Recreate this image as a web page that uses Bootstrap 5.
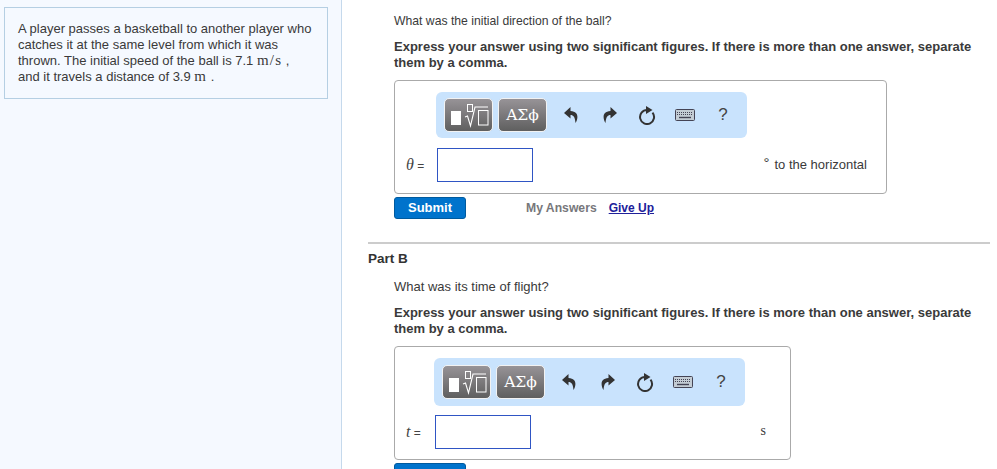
<!DOCTYPE html>
<html lang="en">
<head>
<meta charset="utf-8">
<title>Projectile</title>
<link href="https://cdn.jsdelivr.net/npm/bootstrap@5.3.0/dist/css/bootstrap.min.css" rel="stylesheet">
<style>
html,body{height:469px;overflow:hidden;background:#fff}
body{font-family:"Liberation Sans",Arial,sans-serif;font-size:13px;line-height:16px;color:#3a3a3a}
.shell{height:469px}
.side{width:342px;flex:none;background:#f5f9ff;border-right:1px solid #c5d9ec;padding:7px 13px 0 4px}
.prob{background:#f5f9ff;border:1px solid #b5cfe3;padding:13px 14px 13px 13px;height:92px}
.mfont{font-family:"Liberation Serif",serif;font-size:15px;letter-spacing:1.2px;line-height:0}
.mainp{flex:1 1 auto;padding:13px 7px 0 26px;min-width:0}
.q{padding-left:26px}
.q p{margin:0}
.first-q{font-size:12.2px}
.hint{font-weight:700;margin-top:10px!important}
.ansbox{border:1px solid #aaa;border-radius:4px;height:114px;background:#fff}
.ans1{width:493px;margin-top:9px;padding:11px 19px 0 0}
.ans2{width:397px;margin-top:9px;padding:11px 24px 0 0}
.tools{width:311px;height:46px;background:#c9e3fd;border-radius:6px;padding:6px 0 6px 8px;display:flex;align-items:center}
.ans1 .tools{margin-left:41px}
.ans2 .tools{margin-left:39px;height:48px}
.tbtn{width:49px;height:34px;flex:none;border:1px solid #f2f2f2;border-radius:5px;background:linear-gradient(#979397,#5f5f5f);display:flex;align-items:center;justify-content:center;color:#fff;padding:0;margin-right:5px;font-family:"DejaVu Serif","Liberation Serif",serif;font-size:15.5px}
.ticon{width:38px;flex:none;display:flex;justify-content:center;align-items:center;color:#333}
.qm{font-size:17px;color:#444}
.ansrow{display:flex;align-items:center}
.ans1 .ansrow{margin-top:10px}
.ans2 .ansrow{margin-top:9px}
.lab{font-size:12px;color:#444;padding-left:11px;white-space:nowrap}
.ans1 .lab{width:42px}
.ans2 .lab{width:40px}
.lab i{font-family:"Liberation Serif",serif;font-size:16px}
.fld{width:96px;height:34px;border:1px solid #2f55c4;background:#fff}
.unit{margin-left:auto;margin-bottom:2px}
.deg{font-size:15px;margin-right:5px;position:relative;top:-1px}
.unit-s{font-family:"Liberation Serif",serif;font-size:14px}
.act{margin-top:3px;height:22px;font-weight:700}
.subm{width:72px;height:22px;background:#0073cc;border:1px solid #005a9e;border-radius:3px;color:#fff;font-weight:700;font-size:13px;line-height:18px;padding:0}
.myans{color:#77777b;margin-left:60px;font-size:12.2px}
.giveup{color:#20209a;margin-left:12px;text-decoration:underline;font-size:12px}
.sep{height:2px;background:#ccc;border:0;opacity:1;margin:23px 0 7px 0}
.partb{font-weight:700;font-size:13.5px;color:#333;margin-bottom:12px}
</style>
</head>
<body>
<div class="shell d-flex">
  <aside class="side">
    <div class="prob">A player passes a basketball to another player who catches it at the same level from which it was thrown. The initial speed of the ball is 7.1 <span class="mfont">m/s</span> , and it travels a distance of 3.9 <span class="mfont">m</span> .</div>
  </aside>
  <main class="mainp">
    <div class="q">
      <p class="first-q">What was the initial direction of the ball?</p>
      <p class="hint">Express your answer using two significant figures. If there is more than one answer, separate them by a comma.</p>
      <div class="ansbox ans1">
        <div class="tools">
          <button class="tbtn" type="button" aria-label="Templates"><svg width="47" height="32" viewBox="0 0 47 32"><rect x="6" y="12" width="10" height="14" fill="#fff"/><rect x="22.500" y="5.500" width="5" height="7" fill="none" stroke="#fff"/><path d="M20 18l2.500-1 3 10 4.500-19h13" fill="none" stroke="#fff" stroke-width="1.100"/><rect x="33.500" y="11.500" width="9.500" height="14.500" fill="none" stroke="#fff"/></svg></button>
          <button class="tbtn" type="button">ΑΣϕ</button>
          <span class="ticon"><svg width="15" height="16" viewBox="0 0 15 16"><path fill="#333" d="M6.500 0L0 6l6.500 5.500V8C9.500 8 11 10 11.500 16 14 12 15.500 4.500 6.500 4z"/></svg></span>
          <span class="ticon"><svg width="15" height="16" viewBox="0 0 15 16"><path fill="#333" d="M8.500 0L15 6l-6.500 5.500V8C5.500 8 4 10 3.500 16 1 12-.5 4.500 8.500 4z"/></svg></span>
          <span class="ticon"><svg width="18" height="20" viewBox="0 0 18 20"><path d="M9 5a7 7 0 1 0 5.500 2.600" fill="none" stroke="#333" stroke-width="2"/><path fill="#333" d="M8 1l6.500 4L8 9z"/></svg></span>
          <span class="ticon"><svg width="20" height="12" viewBox="0 0 20 12"><rect x=".5" y=".5" width="19" height="11" rx="1" fill="#c3ccd4" stroke="#445"/><path d="M2 3.500h16M2 5.500h16" stroke="#445" stroke-dasharray="1 1"/><path d="M4 8.500h12" stroke="#445" stroke-width="1.400"/></svg></span>
          <span class="ticon qm">?</span>
        </div>
        <div class="ansrow">
          <div class="lab"><i>θ</i> =</div>
          <div class="fld"></div>
          <div class="unit"><span class="deg">°</span>to the horizontal</div>
        </div>
      </div>
      <div class="act d-flex align-items-center">
        <button class="subm" type="button">Submit</button>
        <span class="myans">My Answers</span>
        <a class="giveup" href="#">Give Up</a>
      </div>
    </div>
    <hr class="sep">
    <div class="partb">Part B</div>
    <div class="q">
      <p>What was its time of flight?</p>
      <p class="hint">Express your answer using two significant figures. If there is more than one answer, separate them by a comma.</p>
      <div class="ansbox ans2">
        <div class="tools">
          <button class="tbtn" type="button" aria-label="Templates"><svg width="47" height="32" viewBox="0 0 47 32"><rect x="6" y="12" width="10" height="14" fill="#fff"/><rect x="22.500" y="5.500" width="5" height="7" fill="none" stroke="#fff"/><path d="M20 18l2.500-1 3 10 4.500-19h13" fill="none" stroke="#fff" stroke-width="1.100"/><rect x="33.500" y="11.500" width="9.500" height="14.500" fill="none" stroke="#fff"/></svg></button>
          <button class="tbtn" type="button">ΑΣϕ</button>
          <span class="ticon"><svg width="15" height="16" viewBox="0 0 15 16"><path fill="#333" d="M6.500 0L0 6l6.500 5.500V8C9.500 8 11 10 11.500 16 14 12 15.500 4.500 6.500 4z"/></svg></span>
          <span class="ticon"><svg width="15" height="16" viewBox="0 0 15 16"><path fill="#333" d="M8.500 0L15 6l-6.500 5.500V8C5.500 8 4 10 3.500 16 1 12-.5 4.500 8.500 4z"/></svg></span>
          <span class="ticon"><svg width="18" height="20" viewBox="0 0 18 20"><path d="M9 5a7 7 0 1 0 5.500 2.600" fill="none" stroke="#333" stroke-width="2"/><path fill="#333" d="M8 1l6.500 4L8 9z"/></svg></span>
          <span class="ticon"><svg width="20" height="12" viewBox="0 0 20 12"><rect x=".5" y=".5" width="19" height="11" rx="1" fill="#c3ccd4" stroke="#445"/><path d="M2 3.500h16M2 5.500h16" stroke="#445" stroke-dasharray="1 1"/><path d="M4 8.500h12" stroke="#445" stroke-width="1.400"/></svg></span>
          <span class="ticon qm">?</span>
        </div>
        <div class="ansrow">
          <div class="lab"><i>t</i> =</div>
          <div class="fld"></div>
          <div class="unit unit-s">s</div>
        </div>
      </div>
      <div class="act d-flex align-items-center">
        <button class="subm" type="button">Submit</button>
      </div>
    </div>
  </main>
</div>
<script src="https://cdn.jsdelivr.net/npm/bootstrap@5.3.0/dist/js/bootstrap.bundle.min.js"></script>
</body>
</html>
